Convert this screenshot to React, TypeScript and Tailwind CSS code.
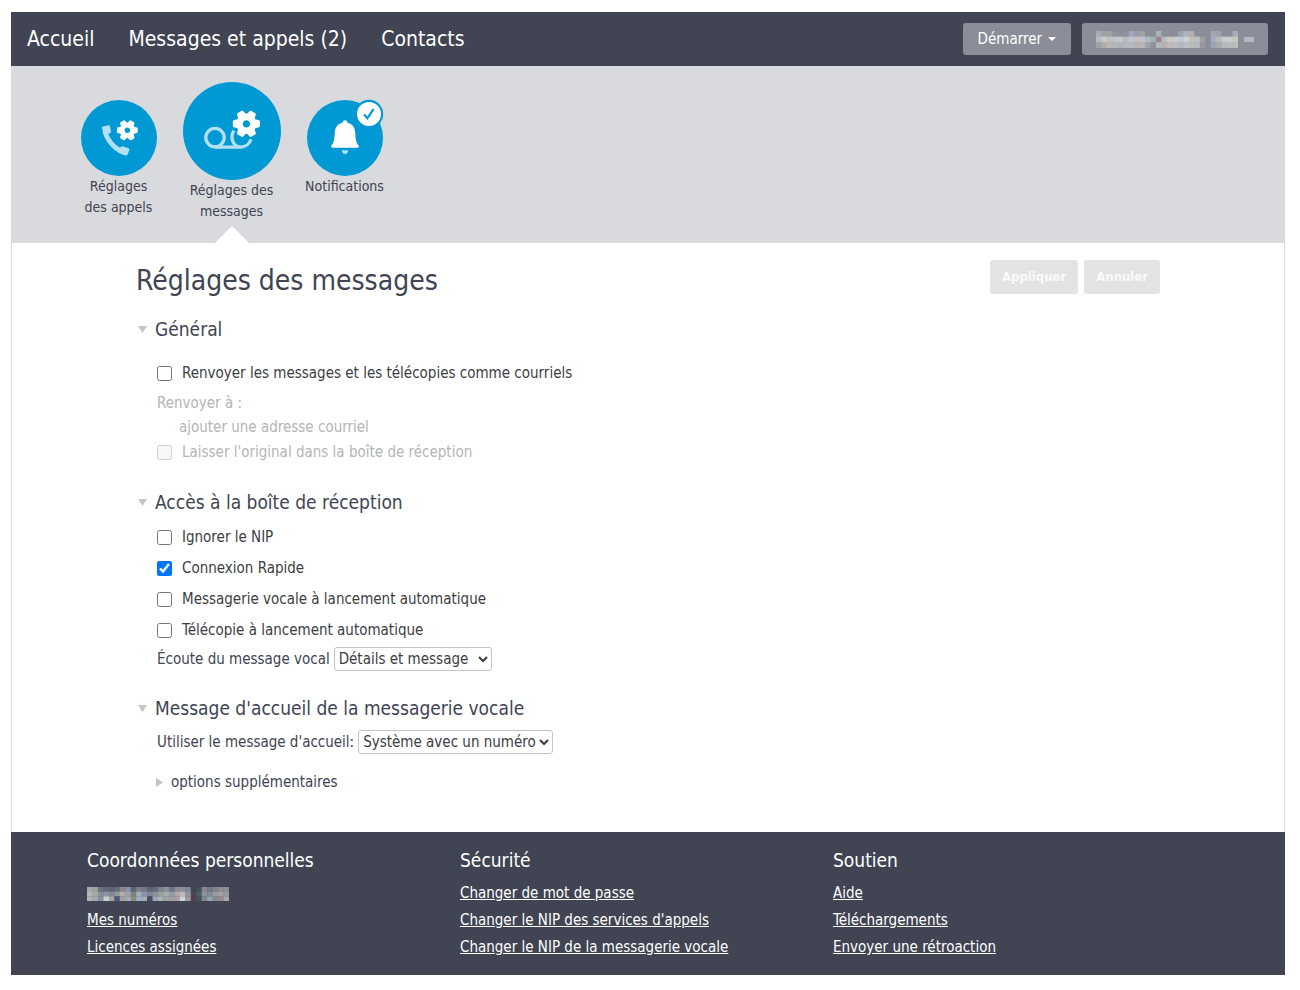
import React, { useState } from 'react'

function Triangle({ className }: { className?: string }) {
  return (
    <svg viewBox="0 0 9 7" className={`w-[9px] h-[7px] shrink-0 fill-[#c4c4c4] ${className ?? ''}`} aria-hidden="true">
      <path d="M0 0h9L4.5 7z" />
    </svg>
  )
}

function Gear({ cx, cy, r }: { cx: number; cy: number; r: number }) {
  return (
    <g transform={`translate(${cx} ${cy}) scale(${r / 10})`}>
      <circle r="5.1" fill="none" stroke="#fff" strokeWidth="4.8" />
      {[30, 90, 150, 210, 270, 330].map((angle) => (
        <path key={angle} d="M-3.3 -6.4L-2.6 -9.3Q-2.4 -10 -1.7 -10H1.7Q2.4 -10 2.6 -9.3L3.3 -6.4z" fill="#fff" transform={`rotate(${angle})`} />
      ))}
    </g>
  )
}

function CallsIcon() {
  return (
    <svg viewBox="0 0 76 76" className="w-[76px] h-[76px]" aria-hidden="true">
      <circle cx="38" cy="38" r="38" fill="#0099d4" />
      <path
        d="M22 26.4L27.6 25.2Q28.7 25 28.9 26.1L29.9 31.4Q30 32.5 29.1 33L27.3 34.2Q31 42.5 38.6 47.6L40.6 46.6Q41.5 46.1 42.4 46.5L47.7 48.3Q48.8 48.8 48.4 49.9L46.6 54.6Q46.2 55.7 45 55.4Q37.5 54.5 29.6 46.2Q21.6 37.5 21.1 27.7Q21 26.6 22 26.4z"
        fill="#b3e0f2"
      />
      <Gear cx={46.3} cy={30.3} r={10.4} />
    </svg>
  )
}

function MessagesIcon() {
  return (
    <svg viewBox="0 0 98 98" className="w-[98px] h-[98px]" aria-hidden="true">
      <circle cx="49" cy="49" r="49" fill="#0099d4" />
      <g fill="none" stroke="#b3e0f2" strokeWidth="3.3">
        <circle cx="32" cy="55.6" r="9.2" />
        <path d="M32 65.2H57.5C62.5 65 66.6 61.6 68 57.2" />
        <path d="M51 48.6C46.8 55 49.5 64.6 57.5 65.2" />
      </g>
      <Gear cx={63.4} cy={41.8} r={13.6} />
    </svg>
  )
}

function BellIcon() {
  return (
    <svg viewBox="0 0 76 76" className="w-[76px] h-[76px] overflow-visible" aria-hidden="true">
      <circle cx="38" cy="38" r="38" fill="#0099d4" />
      <path
        d="M38 20.2C39.6 20.2 40.4 21.3 40.4 22.8C45.6 24 47.9 27.6 48.2 32.5C48.6 39 49 42.5 51.4 45.2C52.3 46.3 51.8 47.8 50.4 47.8H25.6C24.2 47.8 23.7 46.3 24.6 45.2C27 42.5 27.4 39 27.8 32.5C28.1 27.6 30.4 24 35.6 22.8C35.6 21.3 36.4 20.2 38 20.2z"
        fill="#fff"
      />
      <path d="M34.8 50.2H41.2C41 52.6 39.8 54 38 54C36.2 54 35 52.6 34.8 50.2z" fill="#b3e0f2" />
      <circle cx="62" cy="14" r="14.2" fill="#0099d4" />
      <circle cx="62" cy="14" r="12" fill="#fff" />
      <path d="M57 14.6L60.4 18.2L66.6 9" fill="none" stroke="#0099d4" strokeWidth="2.2" />
    </svg>
  )
}

// Masked user name, one hex colour per block
const headerMask = [
  ['#a9acb5', '#9fa1aa', '#a1a39f', '#8f919b', '#8f919b', '#8f919b', '#a3a6bd', '#9b9daa', '#a1a39f', '#8b8e98', '#8b8e98', '#adb3b6', '#8b8e98', '#8b8e98', '#8b8e98', '#9ea2ad', '#aeb3c4', '#b0b0ab', '#8b8e98', '#8b8e98', '#8b8e98', '#a4a6b3', '#9ea1a8', '#8b8e98', '#8b8e98', '#aaacb5'],
  ['#b6bbbd', '#c7cdcf', '#c5c0bb', '#c2c6ca', '#c0cacb', '#bcb9bd', '#bfc4d6', '#c8c0bc', '#bfc3c6', '#b0bcc2', '#a1b0b4', '#9a868e', '#b8bcc2', '#cbc8c5', '#cfccc8', '#bdc8d2', '#c9d3d9', '#c4c0b6', '#bdc0c6', '#a49da3', '#8b8e98', '#a7abc4', '#bbb9b9', '#cbcbc9', '#c6ced2', '#c9cabe'],
  ['#a1a4ab', '#adb0ae', '#beb7b3', '#b5b7bb', '#b1b3ba', '#b9b9bd', '#b4b8c4', '#bab3b3', '#b6b8ba', '#9fa2a9', '#8f929b', '#b6babc', '#b3b1b0', '#bdbdbd', '#babcc1', '#b5b9c0', '#bcbfc4', '#bcbcbc', '#b8b9bc', '#97979e', '#8b8e98', '#9da2b5', '#a9acb4', '#b5b8bb', '#b8bcbe', '#bcbdb9'],
]

const footerMask = [
  ['#aaa9ae', '#9fa3a0', '#6d7280', '#626a79', '#5c6271', '#666d7a', '#8d848b', '#8994a5', '#5c6574', '#7d7f8a', '#6f7a82', '#5d6575', '#646b79', '#7e848e', '#8b9399', '#6d7687', '#8c8c94', '#908f9a', '#7d8896', '#424755', '#454c5b', '#858891', '#6f7880', '#7b828b', '#8a8d91', '#908f94'],
  ['#b5b6b6', '#a2aca2', '#8290a2', '#8c98a2', '#848893', '#8c9b9f', '#b8a7a6', '#9fa1b3', '#808374', '#a0aebc', '#8c929e', '#7787a1', '#8a9293', '#9c9da7', '#a6ada4', '#929bac', '#b7a5ac', '#b8bac4', '#92949b', '#4b4651', '#4d5c67', '#899597', '#7f8c94', '#969ca0', '#a1a1a8', '#999a9c'],
  ['#aeb3ad', '#a6a8af', '#89919f', '#c7ced5', '#aaa5a1', '#4b5a76', '#a79fa1', '#a4aebb', '#8b8c7d', '#9dafc2', '#a8aab0', '#424c6d', '#9ba4ac', '#adb0b5', '#9ba897', '#a2a0a7', '#ac9fa2', '#d2d4da', '#9c9da4', '#51424d', '#49525e', '#7e8791', '#93a3a8', '#858a96', '#99898f', '#a5a7a8'],
]

function MaskedName({ rows, className }: { rows: string[][]; className: string }) {
  return (
    <svg viewBox={`0 0 ${rows[0].length} ${rows.length}`} preserveAspectRatio="none" className={className} aria-hidden="true">
      {rows.map((row, y) =>
        row.map((color, x) => <rect key={`${x}-${y}`} x={x} y={y} width="1.05" height="1.05" fill={color} />)
      )}
    </svg>
  )
}

interface SectionProps {
  title: string
  children: React.ReactNode
}

function Section({ title, children }: SectionProps) {
  const [open, setOpen] = useState(true)

  return (
    <section className="mb-[22px]">
      <h2>
        <button onClick={() => setOpen(!open)} className="flex items-center gap-2 pl-[2px] text-[19px] leading-7">
          <Triangle className={open ? '' : '-rotate-90'} />
          {title}
        </button>
      </h2>
      {open && <div className="pl-[19px]">{children}</div>}
    </section>
  )
}

interface CheckProps {
  label: string
  defaultChecked?: boolean
  disabled?: boolean
}

function Check({ label, defaultChecked, disabled }: CheckProps) {
  return (
    <label className={`flex w-fit items-center gap-[10px] ${disabled ? 'leading-[27px] text-[#b5b5b5]' : 'leading-[31px] text-[#3d3d42]'}`}>
      <input type="checkbox" defaultChecked={defaultChecked} disabled={disabled} className="w-[15px] h-[15px]" />
      {label}
    </label>
  )
}

const footerColumns = [
  { title: 'Coordonnées personnelles', masked: true, links: ['Mes numéros', 'Licences assignées'] },
  { title: 'Sécurité', masked: false, links: ['Changer de mot de passe', "Changer le NIP des services d'appels", 'Changer le NIP de la messagerie vocale'] },
  { title: 'Soutien', masked: false, links: ['Aide', 'Téléchargements', 'Envoyer une rétroaction'] },
]

export default function App() {
  return (
    <div className='bg-white pt-3 pl-[11px] pr-[15px] pb-[15px] font-["DejaVu_Sans_Condensed","DejaVu_Sans",sans-serif] text-[15px] text-[#404453]'>
      {/* Top bar */}
      <header className="flex items-center justify-between bg-[#404453] pl-4 pr-[17px] py-[11px] text-white">
        <nav className="flex gap-[34px] text-[21px] leading-8">
          <a href="#accueil">Accueil</a>
          <a href="#messages">Messages et appels (2)</a>
          <a href="#contacts">Contacts</a>
        </nav>
        <div className="flex gap-[11px]">
          <button className="flex h-8 items-center gap-[6px] rounded-[3px] bg-[#8b8e98] px-[15px]">
            Démarrer
            <svg viewBox="0 0 8 4" className="w-2 h-1 fill-white" aria-hidden="true">
              <path d="M0 0h8L4 4z" />
            </svg>
          </button>
          <button aria-label="Compte" className="flex h-8 items-center gap-[6px] rounded-[3px] bg-[#8b8e98] px-[14px]">
            <MaskedName rows={headerMask} className="w-[142px] h-[17px]" />
            <svg viewBox="0 0 10 5" className="w-[10px] h-[5px] fill-[#b5b7be]" aria-hidden="true">
              <path d="M0 0h10v5H0z" />
            </svg>
          </button>
        </div>
      </header>

      {/* Settings categories */}
      <div className="flex bg-[#d9dade] pl-[51px] text-center text-[14px] leading-[21px]">
        <a href="#appels" className="flex w-[113px] flex-col items-center pt-[34px]">
          <CallsIcon />
          <span>Réglages<br />des appels</span>
        </a>
        <a href="#reglages" className="relative flex w-[113px] flex-col items-center pt-4 pb-[21px]">
          <MessagesIcon />
          <span>Réglages des<br />messages</span>
          <svg viewBox="0 0 34 17" className="absolute bottom-0 w-[34px] h-[17px] fill-white" aria-hidden="true">
            <path d="M0 17L17 0L34 17z" />
          </svg>
        </a>
        <a href="#notifications" className="flex w-[113px] flex-col items-center pt-[34px]">
          <BellIcon />
          <span>Notifications</span>
        </a>
      </div>

      <main className="border-x border-[#dcdce0] px-[124px] pt-[17px] pb-4">
        <div className="mb-[13px] flex items-start justify-between">
          <h1 className="text-[28px] leading-[42px]">Réglages des messages</h1>
          <div className="flex gap-[6px] text-[13px] font-bold text-[#fafafa]">
            <button disabled className="h-[34px] rounded-[3px] bg-[#e3e3e3] px-3">Appliquer</button>
            <button disabled className="h-[34px] rounded-[3px] bg-[#e3e3e3] px-3">Annuler</button>
          </div>
        </div>

        <Section title="Général">
          <div className="pt-[15px] pl-[2px]">
            <Check label="Renvoyer les messages et les télécopies comme courriels" />
            <div className="pt-[2px] text-[#b5b5b5] leading-6">
              <p>Renvoyer à :</p>
              <p className="pl-[22px]">ajouter une adresse courriel</p>
            </div>
            <Check label="Laisser l'original dans la boîte de réception" disabled />
          </div>
        </Section>

        <Section title="Accès à la boîte de réception">
          <div className="pt-[6px] pl-[2px]">
            <Check label="Ignorer le NIP" />
            <Check label="Connexion Rapide" defaultChecked />
            <Check label="Messagerie vocale à lancement automatique" />
            <Check label="Télécopie à lancement automatique" />
            <div className="flex items-center gap-1 leading-[26px]">
              <label htmlFor="ecoute">Écoute du message vocal</label>
              <select id="ecoute" className="h-6 w-[158px] rounded-[3px] border border-[#c4c4c4] bg-white text-[#3d3d42]">
                <option>Détails et message</option>
              </select>
            </div>
          </div>
        </Section>

        <Section title="Message d'accueil de la messagerie vocale">
          <div className="pt-[6px]">
            <div className="flex items-center gap-1 pl-[2px] leading-7">
              <label htmlFor="accueil">Utiliser le message d'accueil:</label>
              <select id="accueil" className="h-6 rounded-[3px] border border-[#c4c4c4] bg-white text-[#3d3d42]">
                <option>Système avec un numéro</option>
              </select>
            </div>
            <button className="mt-[14px] flex items-center gap-[7px] leading-6">
              <Triangle className="-rotate-90" />
              options supplémentaires
            </button>
          </div>
        </Section>
      </main>

      <footer className="grid grid-cols-3 bg-[#404453] pl-[76px] pr-[79px] pt-[14px] pb-[14px] text-white">
        {footerColumns.map((column) => (
          <div key={column.title}>
            <h2 className="text-[19px] leading-7">{column.title}</h2>
            <ul className="pt-[6px] leading-[27px]">
              {column.masked && (
                <li className="flex h-[27px] items-center">
                  <MaskedName rows={footerMask} className="w-[142px] h-[14px]" />
                </li>
              )}
              {column.links.map((link) => (
                <li key={link}>
                  <a href="#aide" className="underline">{link}</a>
                </li>
              ))}
            </ul>
          </div>
        ))}
      </footer>
    </div>
  )
}
